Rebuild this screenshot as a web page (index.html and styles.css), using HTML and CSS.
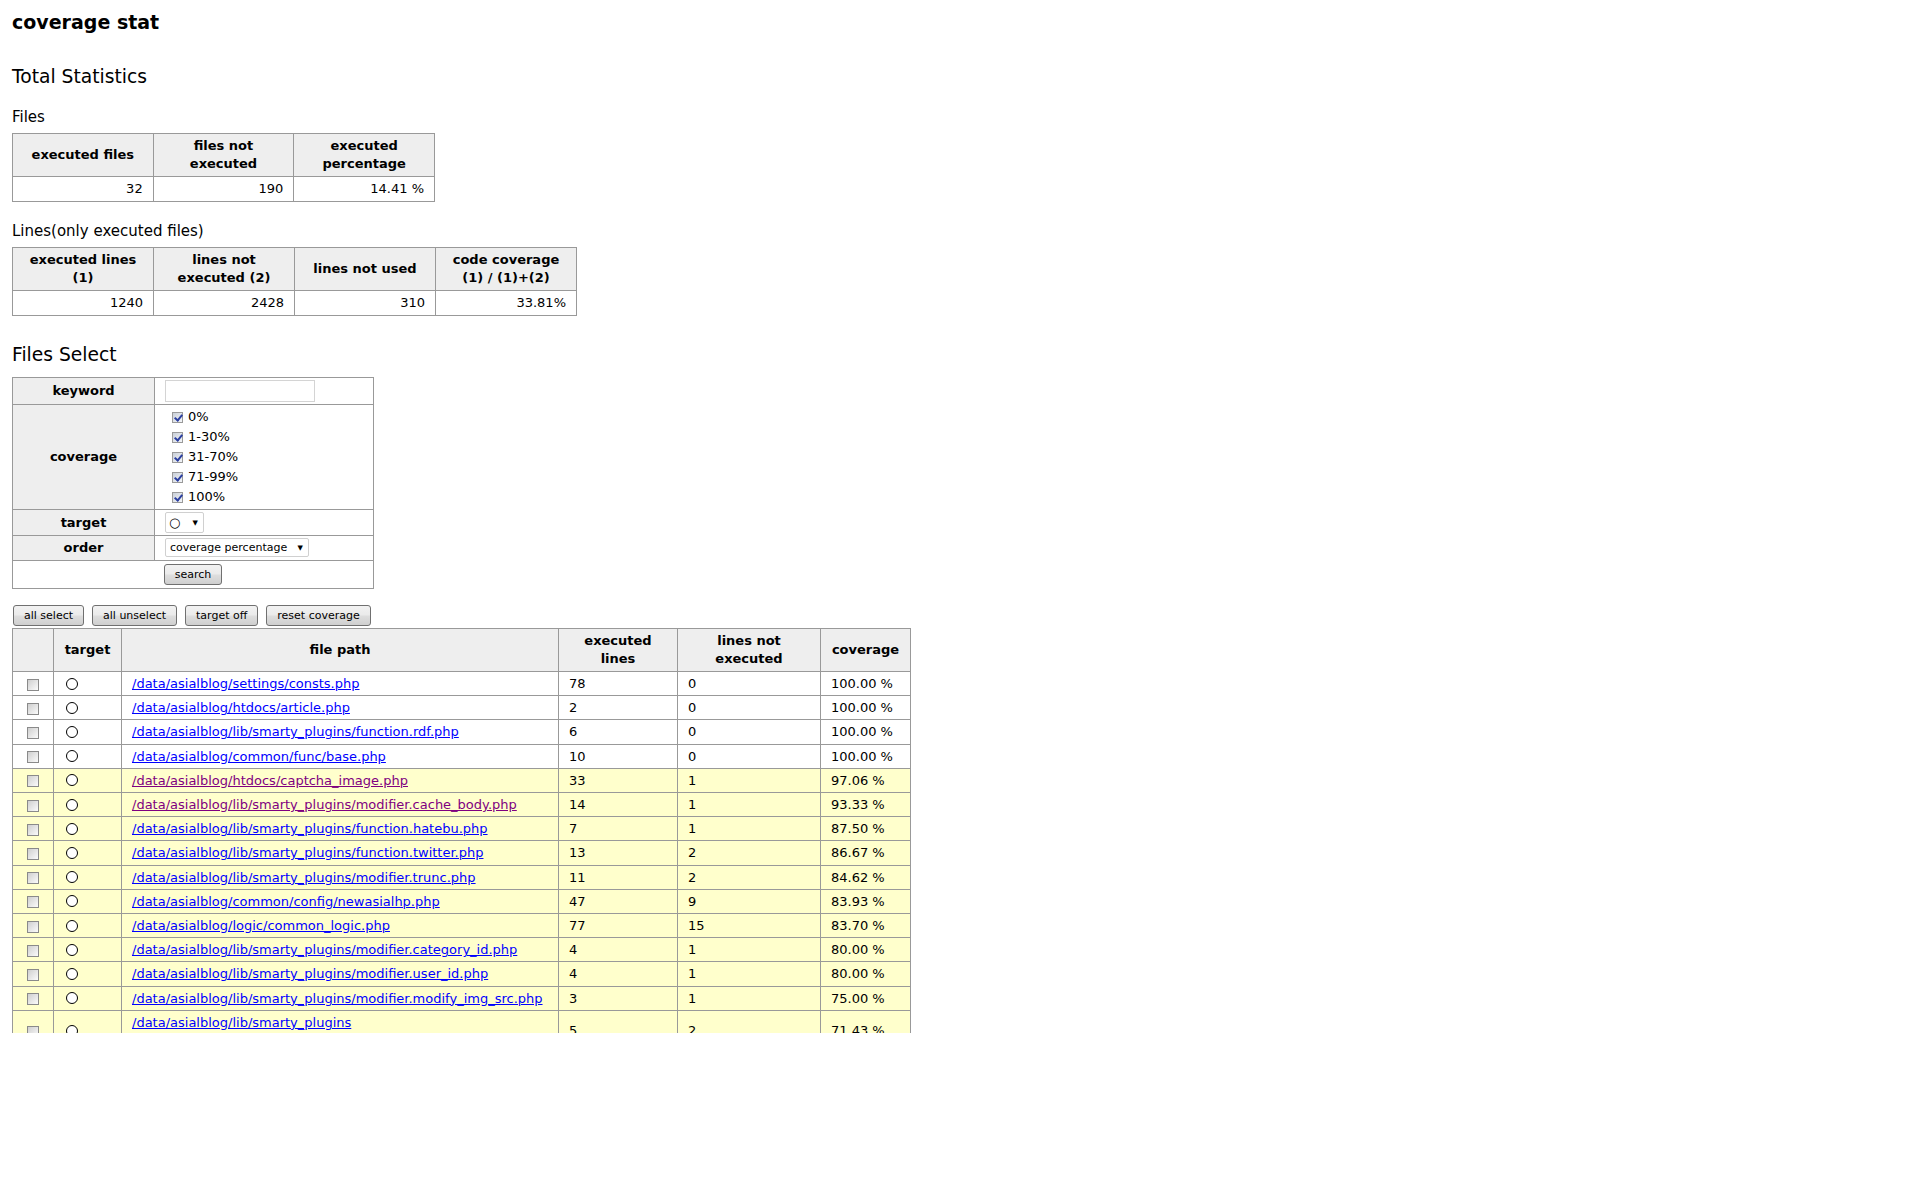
FILE: index.html
```html
<!DOCTYPE html>
<html lang="ja">
<head>
    <meta charset="UTF-8">
    <title>coverage stat</title>
    <link rel="stylesheet" href="styles.css">
</head>
<body>
<div class="page">
    <h1>coverage stat</h1>

    <h2>Total Statistics</h2>

    <h3>Files</h3>
    <table class="stat files">
        <tr>
            <th>executed files</th>
            <th>files not executed</th>
            <th>executed percentage</th>
        </tr>
        <tr>
            <td>32</td>
            <td>190</td>
            <td>14.41 %</td>
        </tr>
    </table>

    <h3>Lines(only executed files)</h3>
    <table class="stat lines">
        <tr>
            <th>executed lines (1)</th>
            <th>lines not executed (2)</th>
            <th>lines not used</th>
            <th>code coverage (1) / (1)+(2)</th>
        </tr>
        <tr>
            <td>1240</td>
            <td>2428</td>
            <td>310</td>
            <td>33.81%</td>
        </tr>
    </table>

    <h2 class="select-title">Files Select</h2>
    <form class="search-form" onsubmit="return false;">
        <table class="search">
            <tr>
                <th>keyword</th>
                <td><input type="text" class="keyword" name="keyword"></td>
            </tr>
            <tr>
                <th>coverage</th>
                <td class="ranges">
                    <label><input type="checkbox" class="check" checked> 0%</label>
                    <label><input type="checkbox" class="check" checked> 1-30%</label>
                    <label><input type="checkbox" class="check" checked> 31-70%</label>
                    <label><input type="checkbox" class="check" checked> 71-99%</label>
                    <label><input type="checkbox" class="check" checked> 100%</label>
                </td>
            </tr>
            <tr>
                <th>target</th>
                <td>
                    <span class="select-wrap">
                        <select class="target-select" name="target">
                            <option>○</option>
                            <option>×</option>
                        </select>
                    </span>
                </td>
            </tr>
            <tr>
                <th>order</th>
                <td>
                    <span class="select-wrap">
                        <select class="order-select" name="order">
                            <option>coverage percentage</option>
                            <option>file path</option>
                        </select>
                    </span>
                </td>
            </tr>
            <tr>
                <td colspan="2" class="submit"><button type="submit">search</button></td>
            </tr>
        </table>
    </form>

    <div class="actions">
        <button type="button">all select</button>
        <button type="button">all unselect</button>
        <button type="button">target off</button>
        <button type="button">reset coverage</button>
    </div>

    <table class="list">
        <tr>
            <th class="c-check"></th>
            <th class="c-target">target</th>
            <th class="c-path">file path</th>
            <th class="c-exec">executed lines</th>
            <th class="c-notexec">lines not executed</th>
            <th class="c-cov">coverage</th>
        </tr>
        <tr class="full">
            <td class="cell-check"><input type="checkbox" class="row-check"></td>
            <td><input type="radio" class="row-radio" name="t1"></td>
            <td><a href="#">/data/asialblog/settings/consts.php</a></td>
            <td>78</td><td>0</td><td>100.00 %</td>
        </tr>
        <tr class="full">
            <td class="cell-check"><input type="checkbox" class="row-check"></td>
            <td><input type="radio" class="row-radio" name="t2"></td>
            <td><a href="#">/data/asialblog/htdocs/article.php</a></td>
            <td>2</td><td>0</td><td>100.00 %</td>
        </tr>
        <tr class="full">
            <td class="cell-check"><input type="checkbox" class="row-check"></td>
            <td><input type="radio" class="row-radio" name="t3"></td>
            <td><a href="#">/data/asialblog/lib/smarty_plugins/function.rdf.php</a></td>
            <td>6</td><td>0</td><td>100.00 %</td>
        </tr>
        <tr class="full">
            <td class="cell-check"><input type="checkbox" class="row-check"></td>
            <td><input type="radio" class="row-radio" name="t4"></td>
            <td><a href="#">/data/asialblog/common/func/base.php</a></td>
            <td>10</td><td>0</td><td>100.00 %</td>
        </tr>
        <tr class="part">
            <td class="cell-check"><input type="checkbox" class="row-check"></td>
            <td><input type="radio" class="row-radio" name="t5"></td>
            <td><a href="#" class="visited">/data/asialblog/htdocs/captcha_image.php</a></td>
            <td>33</td><td>1</td><td>97.06 %</td>
        </tr>
        <tr class="part">
            <td class="cell-check"><input type="checkbox" class="row-check"></td>
            <td><input type="radio" class="row-radio" name="t6"></td>
            <td><a href="#" class="visited">/data/asialblog/lib/smarty_plugins/modifier.cache_body.php</a></td>
            <td>14</td><td>1</td><td>93.33 %</td>
        </tr>
        <tr class="part">
            <td class="cell-check"><input type="checkbox" class="row-check"></td>
            <td><input type="radio" class="row-radio" name="t7"></td>
            <td><a href="#">/data/asialblog/lib/smarty_plugins/function.hatebu.php</a></td>
            <td>7</td><td>1</td><td>87.50 %</td>
        </tr>
        <tr class="part">
            <td class="cell-check"><input type="checkbox" class="row-check"></td>
            <td><input type="radio" class="row-radio" name="t8"></td>
            <td><a href="#">/data/asialblog/lib/smarty_plugins/function.twitter.php</a></td>
            <td>13</td><td>2</td><td>86.67 %</td>
        </tr>
        <tr class="part">
            <td class="cell-check"><input type="checkbox" class="row-check"></td>
            <td><input type="radio" class="row-radio" name="t9"></td>
            <td><a href="#">/data/asialblog/lib/smarty_plugins/modifier.trunc.php</a></td>
            <td>11</td><td>2</td><td>84.62 %</td>
        </tr>
        <tr class="part">
            <td class="cell-check"><input type="checkbox" class="row-check"></td>
            <td><input type="radio" class="row-radio" name="t10"></td>
            <td><a href="#">/data/asialblog/common/config/newasialhp.php</a></td>
            <td>47</td><td>9</td><td>83.93 %</td>
        </tr>
        <tr class="part">
            <td class="cell-check"><input type="checkbox" class="row-check"></td>
            <td><input type="radio" class="row-radio" name="t11"></td>
            <td><a href="#">/data/asialblog/logic/common_logic.php</a></td>
            <td>77</td><td>15</td><td>83.70 %</td>
        </tr>
        <tr class="part">
            <td class="cell-check"><input type="checkbox" class="row-check"></td>
            <td><input type="radio" class="row-radio" name="t12"></td>
            <td><a href="#">/data/asialblog/lib/smarty_plugins/modifier.category_id.php</a></td>
            <td>4</td><td>1</td><td>80.00 %</td>
        </tr>
        <tr class="part">
            <td class="cell-check"><input type="checkbox" class="row-check"></td>
            <td><input type="radio" class="row-radio" name="t13"></td>
            <td><a href="#">/data/asialblog/lib/smarty_plugins/modifier.user_id.php</a></td>
            <td>4</td><td>1</td><td>80.00 %</td>
        </tr>
        <tr class="part">
            <td class="cell-check"><input type="checkbox" class="row-check"></td>
            <td><input type="radio" class="row-radio" name="t14"></td>
            <td><a href="#">/data/asialblog/lib/smarty_plugins/modifier.modify_img_src.php</a></td>
            <td>3</td><td>1</td><td>75.00 %</td>
        </tr>
        <tr class="part">
            <td class="cell-check"><input type="checkbox" class="row-check"></td>
            <td><input type="radio" class="row-radio" name="t15"></td>
            <td><a href="#">/data/asialblog/lib/smarty_plugins<wbr>/modifier.mobile_emoji_convert.php</a></td>
            <td>5</td><td>2</td><td>71.43 %</td>
        </tr>
    </table>
</div>
</body>
</html>
```

FILE: styles.css
```css
* {
    box-sizing: border-box;
}

body {
    margin: 0;
    font-family: "DejaVu Sans", Verdana, sans-serif;
    font-size: 13px;
    color: #000;
    background: #fff;
}

.page {
    height: 1033px;
    overflow: hidden;
    padding: 0 12px;
}

h1 {
    margin: 10px 0 0;
    font-size: 19px;
    line-height: 24px;
}

h2 {
    margin: 31px 0 0;
    font-size: 18.7px;
    font-weight: normal;
    line-height: 24px;
}

h3 {
    margin: 18px 0 6px;
    font-size: 15px;
    font-weight: normal;
    line-height: 20px;
}

.stat + h3 {
    margin-top: 19px;
}

h2.select-title {
    margin: 27px 0 10px;
}

a {
    color: #0000ff;
}

a.visited {
    color: #800080;
}

/* tables */
table {
    border-collapse: collapse;
    table-layout: fixed;
}

th, td {
    border: 1px solid #999;
}

th {
    background: #eee;
    font-weight: bold;
    line-height: 18px;
    padding: 3px 8px;
    text-align: center;
}

.stat td {
    text-align: right;
    padding: 3px 10px;
    line-height: 18px;
}

.stat.files {
    width: 423px;
}

.stat.lines {
    width: 565px;
}

/* search form */
.search-form {
    margin: 0;
}

.search {
    width: 362px;
}

.search th {
    width: 142px;
    padding: 2px 8px;
}

.search td {
    padding: 2px 10px;
    line-height: 20px;
}

.search td.submit {
    padding: 3px;
    text-align: center;
}

.keyword {
    display: block;
    width: 150px;
    height: 22px;
    border: 1px solid #d4d4d4;
    font-family: inherit;
    font-size: 12px;
    padding: 0 3px;
}

.ranges label {
    display: flex;
    align-items: center;
    height: 20px;
}

.check {
    appearance: none;
    width: 11px;
    height: 11px;
    margin: 0 5px 0 7px;
    border: 1px solid #9a9a9a;
    background: linear-gradient(135deg, #c9cfd8, #f4f6f8);
    position: relative;
}

.check:checked::after {
    content: "";
    position: absolute;
    left: 3px;
    top: 0;
    width: 3px;
    height: 6px;
    border: solid #2b3fa0;
    border-width: 0 2px 2px 0;
    transform: rotate(40deg);
}

.select-wrap {
    position: relative;
    display: inline-flex;
    vertical-align: top;
}

.select-wrap::after {
    content: "▼";
    position: absolute;
    right: 6px;
    top: 50%;
    transform: translateY(-50%);
    font-size: 7px;
    line-height: 1;
    pointer-events: none;
}

.select-wrap select {
    appearance: none;
    border: 1px solid #d0d0d0;
    border-radius: 2px;
    background: #fff;
    color: #000;
    font-family: inherit;
}

.target-select {
    width: 39px;
    height: 21px;
    font-size: 13px;
    padding: 0 0 0 3px;
}

.order-select {
    width: 144px;
    height: 19px;
    font-size: 11px;
    padding: 0 0 0 4px;
}

button {
    height: 21px;
    padding: 0 10px;
    border: 1px solid #707070;
    border-radius: 3px;
    background: linear-gradient(#f2f2f2, #ebebeb 45%, #dddddd 55%, #cfcfcf);
    color: #000;
    font-family: inherit;
    font-size: 11px;
    vertical-align: top;
}

.actions {
    display: flex;
    gap: 8px;
    margin: 16px 0 2px 1px;
}

/* file list */
.list {
    width: 898px;
}

.list td {
    padding: 3px 10px;
    line-height: 17.2px;
}

.list .c-check { width: 41px; }
.list .c-target { width: 68px; }
.list .c-path { width: 437px; }
.list .c-exec { width: 119px; }
.list .c-notexec { width: 143px; }
.list .c-cov { width: 90px; }

.list tr.full td {
    background: #fff;
}

.list tr.part td {
    background: #ffffcc;
}

.list td.cell-check {
    text-align: center;
    padding: 3px 0;
}

.row-check {
    appearance: none;
    width: 12px;
    height: 12px;
    margin: 0;
    vertical-align: middle;
    border: 1px solid #8a8a8a;
    background: linear-gradient(135deg, #cfcfcf, #fbfbfb);
}

.row-radio {
    appearance: none;
    width: 12px;
    height: 12px;
    margin: 0 0 2px 2px;
    vertical-align: middle;
    border: 1px solid #000;
    border-radius: 50%;
    background: #fff;
}
```
